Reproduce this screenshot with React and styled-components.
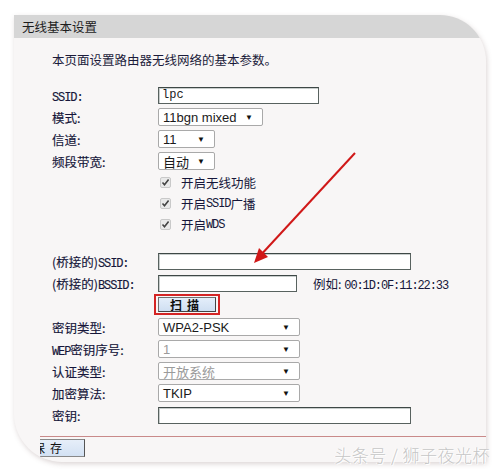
import React from 'react';
import styled, { createGlobalStyle } from 'styled-components';

const GlobalStyle = createGlobalStyle`
    html, body {
        margin: 0;
        padding: 0;
        background: #ffffff;
        font-family: "Noto Sans CJK SC", "Liberation Sans", sans-serif;
    }
`;

const Page = styled.div`
    width: 500px;
    height: 472px;
    padding: 15px 14px 10px 14px;
    box-sizing: border-box;
    position: relative;
    overflow: hidden;
    background: #fff;
`;

const Panel = styled.section`
    position: relative;
    height: 447px;
    display: flex;
    flex-direction: column;
    background: #f8f6f6;
    border-radius: 0 46px 0 48px;
    box-shadow: 1px 2px 5px rgba(120, 90, 90, 0.25);
    overflow: hidden;
`;

const Header = styled.div`
    height: 23px;
    flex: none;
    background: #d6d6d6;
    color: #1d1d1d;
    font-size: 12.5px;
    line-height: 23px;
    padding-left: 8px;
`;

const Body = styled.div`
    padding: 14px 0 0 38px;
    display: flex;
    flex-direction: column;
`;

const Intro = styled.p`
    margin: 0 0 16px 0;
    font-size: 12.5px;
    line-height: 16px;
    color: #1b1b3a;
`;

const Row = styled.div`
    display: flex;
    align-items: center;
    height: ${p => p.$h || 22}px;
    margin-top: ${p => p.$gap || 0}px;
`;

const Label = styled.span`
    width: 106px;
    flex: none;
    font-size: 12.5px;
    color: #16163a;
    -webkit-text-stroke: 0.15px #16163a;
`;

const Latin = styled.span`
    font-family: "Liberation Mono", monospace;
    font-size: 12px;
    letter-spacing: -1.1px;
`;

const TextInput = styled.div`
    width: ${p => p.$w}px;
    height: 17px;
    box-sizing: border-box;
    background: #fff;
    border: 1px solid #58625f;
    border-top-color: #3e4846;
    box-shadow: inset 1px 1px 0 #c8cdcc;
    font-family: "Liberation Mono", monospace;
    font-size: 12px;
    line-height: 15px;
    padding-left: 3px;
    color: #222;
`;

const Select = styled.div`
    width: ${p => p.$w}px;
    height: 18px;
    box-sizing: border-box;
    background: #fff;
    border: 1px solid #a9a9a9;
    border-radius: 2px;
    display: flex;
    align-items: center;
    justify-content: space-between;
    padding: 0 9px 0 4px;
    font-family: "Liberation Sans", "Noto Sans CJK SC", sans-serif;
    font-size: 13px;
    color: ${p => (p.$disabled ? '#9b9b9b' : '#1a1a1a')};
`;

const Arrow = styled.span`
    font-size: 8px;
    color: #111;
`;

const CheckRow = styled.div`
    display: flex;
    align-items: center;
    height: 21px;
    padding-left: 108px;
    font-size: 12.5px;
    color: #16163a;
`;

const Check = styled.span`
    width: 11px;
    height: 11px;
    box-sizing: border-box;
    border: 1px solid #c9c9c9;
    background: #e9e9e9;
    border-radius: 2px;
    margin-right: 10px;
    display: flex;
    align-items: center;
    justify-content: center;
`;

const Hint = styled.span`
    margin-left: 16px;
    font-size: 12.5px;
    color: #16163a;
`;

const ScanFrame = styled.div`
    margin-left: 102px;
    border: 2px solid #d42424;
    padding: 1px 2px;
    display: inline-flex;
`;

const ScanButton = styled.div`
    width: 58px;
    height: 15px;
    box-sizing: border-box;
    border: 1px solid #707070;
    border-right-color: #444;
    border-bottom-color: #444;
    background: linear-gradient(#e4eefa, #cfdff2);
    font-size: 12px;
    line-height: 13px;
    text-align: center;
    letter-spacing: 5px;
    color: #111;
    font-weight: bold;
`;

const Footer = styled.div`
    margin-left: 26px;
    margin-top: 10px;
    border-top: 1px solid #c98a8a;
    padding-top: 2px;
`;

const SaveButton = styled.div`
    width: 45px;
    height: 18px;
    box-sizing: border-box;
    border: 1px solid #888;
    border-left: none;
    border-right-color: #555;
    background: linear-gradient(#e6eef9, #d3e1f3);
    font-size: 12px;
    line-height: 16px;
    letter-spacing: 5px;
    color: #111;
    white-space: nowrap;
    overflow: hidden;
    text-indent: -7px;
`;

const Pointer = styled.svg`
    position: absolute;
    left: 0;
    top: 0;
    pointer-events: none;
`;

const Watermark = styled.div`
    position: absolute;
    right: 10px;
    bottom: 5px;
    font-size: 17px;
    font-weight: 300;
    color: #c6c6c6;
    letter-spacing: 0.5px;
    text-shadow: 1px 1px 0 #fff, -1px 0 0 #fff;
`;

const Tick = () => (
    <svg width="9" height="9" viewBox="0 0 9 9">
        <path d="M1.5 4.5 L3.5 6.8 L7.6 1.6" fill="none" stroke="#444" strokeWidth="1.6" />
    </svg>
);

function Field({ label, children, gap }) {
    return (
        <Row $gap={gap}>
            <Label>{label}</Label>
            {children}
        </Row>
    );
}

function Dropdown({ w, value, disabled }) {
    return (
        <Select $w={w} $disabled={disabled}>
            <span>{value}</span>
            <Arrow>▼</Arrow>
        </Select>
    );
}

export default function App() {
    return (
        <Page>
            <GlobalStyle />
            <Panel>
                <Header>无线基本设置</Header>
                <Body>
                    <Intro>本页面设置路由器无线网络的基本参数。</Intro>
                    <Field label={<Latin>SSID:</Latin>}>
                        <TextInput $w={161}>lpc</TextInput>
                    </Field>
                    <Field label="模式:"><Dropdown w={105} value="11bgn mixed" /></Field>
                    <Field label="信道:"><Dropdown w={57} value="11" /></Field>
                    <Field label="频段带宽:"><Dropdown w={57} value="自动" /></Field>
                    <CheckRow><Check><Tick /></Check>开启无线功能</CheckRow>
                    <CheckRow><Check><Tick /></Check>开启<Latin>SSID</Latin>广播</CheckRow>
                    <CheckRow><Check><Tick /></Check>开启<Latin>WDS</Latin></CheckRow>
                    <Field gap={15} label={<>(桥接的)<Latin>SSID:</Latin></>}>
                        <TextInput $w={253} />
                    </Field>
                    <Field label={<>(桥接的)<Latin>BSSID:</Latin></>}>
                        <TextInput $w={139} />
                        <Hint>例如: <Latin>00:1D:0F:11:22:33</Latin></Hint>
                    </Field>
                    <Row $h={20}>
                        <ScanFrame><ScanButton>扫描</ScanButton></ScanFrame>
                    </Row>
                    <Field gap={2} label="密钥类型:"><Dropdown w={142} value="WPA2-PSK" /></Field>
                    <Field label={<><Latin>WEP</Latin>密钥序号:</>}><Dropdown w={142} value="1" disabled /></Field>
                    <Field label="认证类型:"><Dropdown w={142} value="开放系统" disabled /></Field>
                    <Field label="加密算法:"><Dropdown w={142} value="TKIP" /></Field>
                    <Field label="密钥:"><TextInput $w={253} /></Field>
                </Body>
                <Footer><SaveButton>保存</SaveButton></Footer>
                <Pointer width="472" height="447">
                    <line x1="341" y1="138" x2="244" y2="243" stroke="#d01818" strokeWidth="2" />
                    <path d="M240 248 L245 233 L254 242 Z" fill="#d01818" />
                </Pointer>
            </Panel>
            <Watermark>头条号 / 狮子夜光杯</Watermark>
        </Page>
    );
}
